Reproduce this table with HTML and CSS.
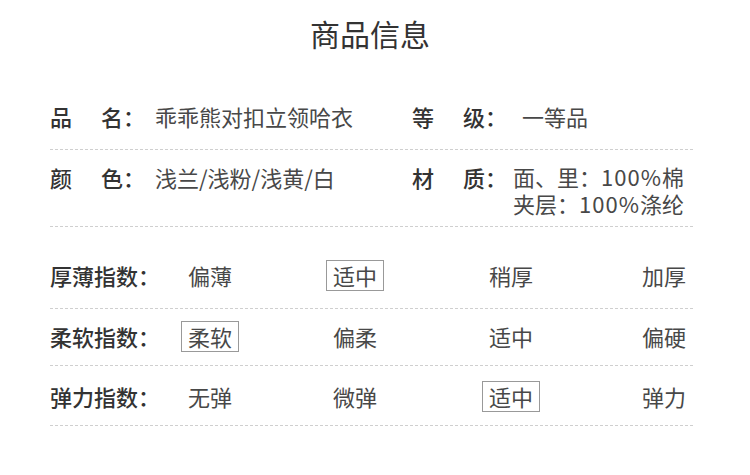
FILE: index.html
```html
<!DOCTYPE html>
<html lang="zh-CN">
<head>
<meta charset="utf-8">
<title>商品信息</title>
<link rel="stylesheet" href="styles.css">
</head>
<body>
<div class="page">
  <h1 class="title">商品信息</h1>

  <div class="info-row first">
    <div class="cell">
      <div class="label"><span>品</span><span>名：</span></div>
      <div class="value">乖乖熊对扣立领哈衣</div>
    </div>
    <div class="cell">
      <div class="label"><span>等</span><span>级：</span></div>
      <div class="value shift">一等品</div>
    </div>
  </div>

  <div class="info-row second">
    <div class="cell">
      <div class="label"><span>颜</span><span>色：</span></div>
      <div class="value">浅兰/浅粉/浅黄/白</div>
    </div>
    <div class="cell">
      <div class="label"><span>材</span><span>质：</span></div>
      <div class="value">
        <div class="line">面、里：<span class="num">100%</span>棉</div>
        <div class="line">夹层：<span class="num">100%</span>涤纶</div>
      </div>
    </div>
  </div>

  <div class="index-row r1">
    <div class="ilabel">厚薄指数：</div>
    <div class="opt">偏薄</div>
    <div class="opt on">适中</div>
    <div class="opt">稍厚</div>
    <div class="opt">加厚</div>
  </div>

  <div class="index-row r2">
    <div class="ilabel">柔软指数：</div>
    <div class="opt on">柔软</div>
    <div class="opt">偏柔</div>
    <div class="opt">适中</div>
    <div class="opt">偏硬</div>
  </div>

  <div class="index-row r3">
    <div class="ilabel">弹力指数：</div>
    <div class="opt">无弹</div>
    <div class="opt">微弹</div>
    <div class="opt on">适中</div>
    <div class="opt">弹力</div>
  </div>
</div>
</body>
</html>
```

FILE: styles.css
```css
* { box-sizing: border-box; }

html, body {
  margin: 0;
  padding: 0;
  background: #ffffff;
}

body {
  font-family: "Noto Sans CJK SC", "Noto Sans", sans-serif;
  color: #444;
  width: 750px;
  height: 475px;
  overflow: hidden;
}

.page {
  padding: 13px 57px 0 50px;
}

.title {
  margin: 0 0 2px;
  font-size: 30px;
  line-height: 40px;
  font-weight: 400;
  color: #333;
  text-align: center;
  padding-right: 3px;
}

.info-row {
  display: grid;
  grid-template-columns: 362px 1fr;
  font-size: 22px;
  line-height: 28px;
  border-bottom: 1px dashed #cfcfcf;
}

.info-row.first { padding: 47px 0 19px; }
.info-row.second { padding: 13px 0 9px; }

.cell {
  display: flex;
  align-items: flex-start;
}

.label {
  display: flex;
  justify-content: space-between;
  width: 95px;
  flex: none;
  font-weight: 500;
  color: #333;
}

.value {
  margin-left: 10px;
  color: #484848;
}

.line {
  height: 27px;
  line-height: 27px;
}

.num {
  letter-spacing: 1px;
}

.cell + .cell .value { margin-left: 6px; }
.cell + .cell .value.shift { padding-left: 9px; }

.index-row {
  display: grid;
  grid-template-columns: 131px 145px 156px 153px 58px;
  align-items: center;
  font-size: 22px;
  border-bottom: 1px dashed #cfcfcf;
}

.index-row.r1 { padding: 33px 0 17px; }
.index-row.r2 { padding: 12px 0 13px; }
.index-row.r3 { padding: 15px 0 13px; }

.ilabel {
  font-weight: 500;
  color: #333;
  line-height: 29px;
}

.opt {
  width: 58px;
  height: 31px;
  line-height: 29px;
  padding: 0 6px;
  border: 1px solid transparent;
  text-align: center;
  white-space: nowrap;
  color: #484848;
}

.opt.on {
  border-color: #999;
}
```
